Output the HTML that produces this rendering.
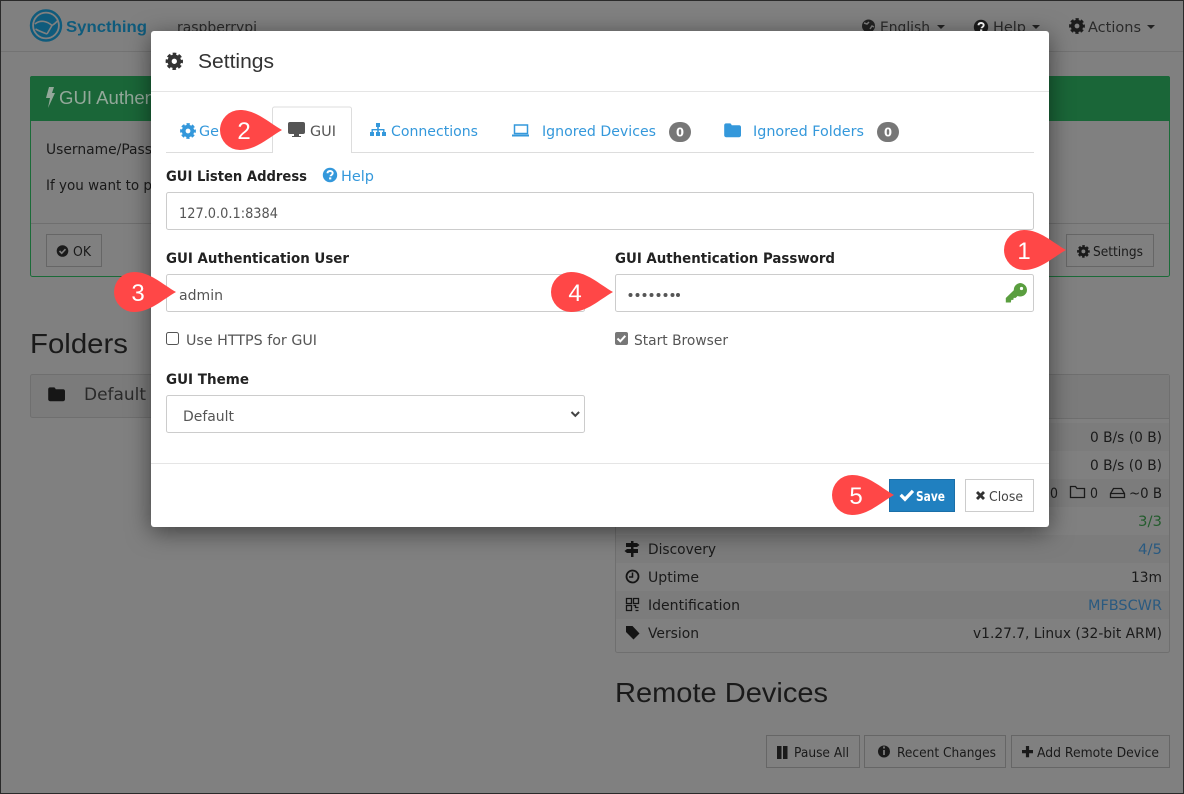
<!DOCTYPE html>
<html><head><meta charset="utf-8"><title>Syncthing Settings</title>
<style>
html,body{margin:0;padding:0;background:#808080;width:1184px;height:794px;overflow:hidden}
svg{display:block;position:absolute;left:0;top:0}
text{font-family:"DejaVu Sans","Liberation Sans",sans-serif;font-size:14.5px;fill:#1a1a1a}
text.h{font-family:"Liberation Sans",sans-serif}
.b{font-weight:bold}
text.m{fill:#333}
text.l{fill:#3498db}
text.i{fill:#555}
text.n{font-family:"Liberation Sans",sans-serif;fill:#fff;font-size:24px}
</style></head><body>
<svg width="1184" height="794" viewBox="0 0 1184 794" xmlns="http://www.w3.org/2000/svg">
<defs>
<g id="gear"><circle cx="8" cy="8" r="4.300" fill="none" stroke="currentColor" stroke-width="3.800"/><circle cx="8" cy="8" r="6.500" fill="none" stroke="currentColor" stroke-width="2.800" stroke-dasharray="3.100 2" stroke-dashoffset="1.550"/></g>
<g id="help"><circle cx="8" cy="8" r="7.200" fill="currentColor"/><path d="M5.400 6.200C5.600 4.700 6.700 4 8.100 4c1.500 0 2.600.9 2.600 2.100 0 1.900-2.100 1.800-2.100 3.200" fill="none" stroke="#fff" stroke-width="1.900"/><rect x="7.100" y="10.400" width="2.200" height="2" fill="#fff"/></g>
<path id="folder" d="M1 3.500C1 2.700 1.700 2 2.500 2h3.200c.8 0 1.100.5 1.400 1.200l.2.3h6.200c.8 0 1.500.7 1.500 1.500v7c0 .8-.7 1.500-1.500 1.500h-11C1.700 13.500 1 12.800 1 12z"/>
</defs>

<!-- background page -->
<rect x="0" y="0" width="1184" height="794" fill="#808080"/>
<rect x="0" y="51" width="1184" height="1" fill="#737373"/>
<circle cx="46" cy="25.500" r="15" fill="#808080" stroke="#0f5b7c" stroke-width="2.400"/>
<circle cx="46" cy="25.500" r="12" fill="#0f5b7c"/>
<path d="M35 24C40 19.500 47 21 52 25.500M52 25.500C54.500 24 56 22.500 57.500 21M52 25.500L47 34M35.500 29C39 31 43 32.500 47 34" fill="none" stroke="#808080" stroke-width="1.600"/>
<text class="b h" x="66" y="32" textLength="81" lengthAdjust="spacingAndGlyphs" style="fill:#0f5b7c;font-size:16px">Syncthing</text>
<text x="177" y="32" textLength="80" lengthAdjust="spacingAndGlyphs" style="fill:#2a2a2a">raspberrypi</text>
<circle cx="868.500" cy="26" r="6.500" fill="#222"/><path d="M864 23l3 1 2-2M870 29l2-3 2 1" fill="none" stroke="#808080" stroke-width="1.500"/>
<text x="880" y="32" textLength="50" lengthAdjust="spacingAndGlyphs" style="fill:#2a2a2a">English</text>
<path d="M937 25h8l-4 4z" fill="#222"/>
<use href="#help" x="973" y="19" style="color:#1c1c1c"/>
<text x="993" y="32" textLength="33" lengthAdjust="spacingAndGlyphs" style="fill:#2a2a2a">Help</text>
<path d="M1032 25h8l-4 4z" fill="#222"/>
<use href="#gear" x="1069" y="18" style="color:#1c1c1c"/>
<text x="1088" y="32" textLength="53" lengthAdjust="spacingAndGlyphs" style="fill:#2a2a2a">Actions</text>
<path d="M1147 25h8l-4 4z" fill="#222"/>

<!-- auth panel -->
<rect x="30.500" y="76.500" width="1139" height="200" rx="2" fill="#808080" stroke="#1b6b38"/>
<path d="M30 78a2 2 0 0 1 2-2h1136a2 2 0 0 1 2 2v43H30z" fill="#1a6638"/>
<path d="M49 87h5l-2 6h3l-7 15 2-10h-4z" fill="#93a89a"/>
<text class="h" x="59" y="104" textLength="96" lengthAdjust="spacingAndGlyphs" style="fill:#93a89a;font-size:18px">GUI Authen</text>
<text x="46" y="154" textLength="106" lengthAdjust="spacingAndGlyphs">Username/Pass</text>
<text x="46" y="190" textLength="106" lengthAdjust="spacingAndGlyphs">If you want to p</text>
<rect x="31" y="223" width="1138" height="1" fill="#6f6f6f"/>
<rect x="46.500" y="234.500" width="55" height="32" fill="#808080" stroke="#666"/>
<circle cx="62.500" cy="251" r="5.800" fill="#1a1a1a"/><path d="M59.500 251l2.200 2.200 3.800-4" fill="none" stroke="#808080" stroke-width="1.600"/>
<text x="73" y="256" textLength="18" lengthAdjust="spacingAndGlyphs" style="font-size:13.5px">OK</text>
<rect x="1066.500" y="234.500" width="87" height="32" fill="#808080" stroke="#666"/>
<use href="#gear" transform="translate(1077 245) scale(.8)" style="color:#1a1a1a"/>
<text x="1093" y="256" textLength="50" lengthAdjust="spacingAndGlyphs" style="font-size:13.5px">Settings</text>

<!-- folders -->
<text class="h" x="30" y="353" textLength="98" lengthAdjust="spacingAndGlyphs" style="font-size:28px">Folders</text>
<rect x="30.500" y="374.500" width="140" height="43" rx="2" fill="#7b7b7b" stroke="#6f6f6f"/>
<use href="#folder" transform="translate(47 385) scale(1.200)" fill="#161616"/>
<text x="84" y="400" textLength="62" lengthAdjust="spacingAndGlyphs" style="font-size:17px;fill:#2a2a2a">Default</text>

<!-- status panel -->
<rect x="615.500" y="374.500" width="554" height="278" rx="2" fill="#808080" stroke="#6f6f6f"/>
<rect x="616" y="375" width="553" height="43" fill="#7b7b7b"/>
<rect x="616" y="418" width="553" height="1" fill="#6f6f6f"/>
<rect x="616" y="423" width="553" height="28" fill="#7c7c7c"/>
<rect x="616" y="479" width="553" height="28" fill="#7c7c7c"/>
<rect x="616" y="535" width="553" height="28" fill="#7c7c7c"/>
<rect x="616" y="591" width="553" height="28" fill="#7c7c7c"/>
<text x="1090" y="442" textLength="72" lengthAdjust="spacingAndGlyphs">0 B/s (0 B)</text>
<text x="1090" y="470" textLength="72" lengthAdjust="spacingAndGlyphs">0 B/s (0 B)</text>
<text x="1050" y="498" textLength="8" lengthAdjust="spacingAndGlyphs">0</text>
<path d="M1070.500 486.500h5l1.500 2h7.500v9h-14z" fill="none" stroke="#1a1a1a" stroke-width="1.300"/>
<text x="1090" y="498" textLength="8" lengthAdjust="spacingAndGlyphs">0</text>
<path d="M1110.500 497.500v-4l3-5h8l3 5v4zM1110.500 493.500h14" fill="none" stroke="#1a1a1a" stroke-width="1.300"/>
<text x="1129" y="498" textLength="33" lengthAdjust="spacingAndGlyphs">~0 B</text>
<text x="1138" y="526" textLength="24" lengthAdjust="spacingAndGlyphs" style="fill:#245c2e">3/3</text>
<path d="M631 541h2.500v16H631zM626 543h11l2.500 2-2.500 2h-11zM627 549h11v4h-11l-2.500-2z" fill="#141414"/>
<text x="648" y="554" textLength="68" lengthAdjust="spacingAndGlyphs">Discovery</text>
<text x="1138" y="554" textLength="24" lengthAdjust="spacingAndGlyphs" style="fill:#2a5a80">4/5</text>
<circle cx="632.500" cy="576.500" r="6" fill="none" stroke="#141414" stroke-width="1.800"/><path d="M632.500 572.500v4.500h-3.500" fill="none" stroke="#141414" stroke-width="1.500"/>
<text x="648" y="582" textLength="51" lengthAdjust="spacingAndGlyphs">Uptime</text>
<text x="1131" y="582" textLength="31" lengthAdjust="spacingAndGlyphs">13m</text>
<path d="M626.500 598.500h5v5h-5zM633.500 598.500h5v5h-5zM626.500 605.500h5v5h-5zM633.500 605.500h2v2h3M638.500 610.500h-3" fill="none" stroke="#141414" stroke-width="1.300"/>
<text x="648" y="610" textLength="92" lengthAdjust="spacingAndGlyphs">Identification</text>
<text x="1088" y="610" textLength="74" lengthAdjust="spacingAndGlyphs" style="fill:#2a5a80">MFBSCWR</text>
<path d="M626 626h6.500l7 7.500-6 6-7.500-7.500z" fill="#141414"/>
<text x="648" y="638" textLength="51" lengthAdjust="spacingAndGlyphs">Version</text>
<text x="973" y="638" textLength="189" lengthAdjust="spacingAndGlyphs">v1.27.7, Linux (32-bit ARM)</text>

<text class="h" x="615" y="702" textLength="213" lengthAdjust="spacingAndGlyphs" style="font-size:28px">Remote Devices</text>
<rect x="766.500" y="735.500" width="93" height="32" fill="#808080" stroke="#666"/>
<path d="M777 746h4.500v13H777zM783 746h4.500v13H783z" fill="#1a1a1a"/>
<text x="794" y="757" textLength="55" lengthAdjust="spacingAndGlyphs" style="font-size:13.5px">Pause All</text>
<rect x="864.500" y="735.500" width="141" height="32" fill="#808080" stroke="#666"/>
<circle cx="884" cy="751.500" r="6" fill="#1a1a1a"/><path d="M884 746.500v2M884 750v5" stroke="#808080" stroke-width="1.700"/>
<text x="897" y="757" textLength="99" lengthAdjust="spacingAndGlyphs" style="font-size:13.5px">Recent Changes</text>
<rect x="1011.500" y="735.500" width="158" height="32" fill="#808080" stroke="#666"/>
<path d="M1022 750h11v3.200h-11zM1025.900 746h3.200v11.300h-3.200z" fill="#1a1a1a"/>
<text x="1037" y="757" textLength="122" lengthAdjust="spacingAndGlyphs" style="font-size:13.5px">Add Remote Device</text>

<!-- screenshot frame -->
<rect x="0.500" y="0.500" width="1183" height="793" fill="none" stroke="#2a2a2a"/>

<!-- modal -->
<rect x="151" y="31" width="898" height="496" rx="3" fill="#fff" style="filter:drop-shadow(0 5px 12px rgba(0,0,0,.5))"/>
<use href="#gear" transform="translate(165.500 52.500) scale(1.100)" style="color:#333"/>
<text class="h m" x="198" y="68" textLength="76" lengthAdjust="spacingAndGlyphs" style="font-size:20px">Settings</text>
<rect x="151" y="91" width="898" height="1" fill="#e5e5e5"/>

<rect x="166" y="152" width="868" height="1" fill="#ddd"/>
<path d="M272.500 152.500V109a2 2 0 0 1 2-2h75a2 2 0 0 1 2 2v44" fill="#fff" stroke="#ddd"/>
<rect x="273" y="150" width="78" height="4" fill="#fff"/>
<use href="#gear" x="180" y="123" style="color:#3498db"/>
<text class="l" x="199" y="136" textLength="20" lengthAdjust="spacingAndGlyphs">Ge</text>
<rect x="288.500" y="122.500" width="16" height="11" rx="1.500" fill="#555" stroke="#555"/><path d="M294 134h5v2h2v1h-9v-1h2z" fill="#555"/>
<text class="i" x="310" y="136" textLength="26" lengthAdjust="spacingAndGlyphs">GUI</text>
<path d="M376 123h4v4h-1.200v2h5.700v3h1.500v4h-4v-4h1.100v-1.600h-4.300v1.600h1.200v4h-4v-4h1.200v-1.600h-4.300v1.600h1.100v4h-4v-4h1.500v-3h5.700v-2H376z" fill="#3498db"/>
<text class="l" x="391" y="136" textLength="87" lengthAdjust="spacingAndGlyphs">Connections</text>
<rect x="514.500" y="125" width="13" height="8.500" fill="none" stroke="#3498db" stroke-width="1.500"/><rect x="512" y="134.500" width="17" height="2" fill="#3498db"/>
<text class="l" x="542" y="136" textLength="114" lengthAdjust="spacingAndGlyphs">Ignored Devices</text>
<rect x="669" y="122" width="22" height="20" rx="10" fill="#777"/>
<text x="676" y="136.500" textLength="8" lengthAdjust="spacingAndGlyphs" class="b" style="font-size:12px;fill:#fff">0</text>
<use href="#folder" fill="#3498db" transform="translate(723 121) scale(1.200)"/>
<text class="l" x="753" y="136" textLength="111" lengthAdjust="spacingAndGlyphs">Ignored Folders</text>
<rect x="877" y="122" width="22" height="20" rx="10" fill="#777"/>
<text x="884" y="136.500" textLength="8" lengthAdjust="spacingAndGlyphs" class="b" style="font-size:12px;fill:#fff">0</text>

<text class="b" x="166" y="181" textLength="141" lengthAdjust="spacingAndGlyphs" style="fill:#222">GUI Listen Address</text>
<use href="#help" x="322" y="167" style="color:#3498db"/>
<text class="l" x="341" y="181" textLength="33" lengthAdjust="spacingAndGlyphs">Help</text>
<rect x="166.500" y="192.500" width="867" height="37" rx="2" fill="#fff" stroke="#ccc"/>
<text class="i" x="179" y="218" textLength="99" lengthAdjust="spacingAndGlyphs">127.0.0.1:8384</text>

<text class="b" x="166" y="263" textLength="183" lengthAdjust="spacingAndGlyphs" style="fill:#222">GUI Authentication User</text>
<rect x="166.500" y="274.500" width="418" height="37" rx="2" fill="#fff" stroke="#ccc"/>
<text class="i" x="179" y="300" textLength="44" lengthAdjust="spacingAndGlyphs">admin</text>
<text class="b" x="615" y="263" textLength="220" lengthAdjust="spacingAndGlyphs" style="fill:#222">GUI Authentication Password</text>
<rect x="615.500" y="274.500" width="418" height="37" rx="2" fill="#fff" stroke="#ccc"/>
<g fill="#555"><circle cx="630.500" cy="295" r="2"/><circle cx="637.500" cy="295" r="2"/><circle cx="644.500" cy="295" r="2"/><circle cx="651.500" cy="295" r="2"/><circle cx="658.500" cy="295" r="2"/><circle cx="665.500" cy="295" r="2"/><circle cx="672.500" cy="295" r="2"/><circle cx="678" cy="295" r="2"/></g>
<path d="M1020 283a7 7 0 0 1 6.500 9.500 7 7 0 0 1-9 3.500l-1.800 1.900h-2l-.4 2h-2l-.5 2.600h-5v-4.500l8-7.800a7 7 0 0 1 6.200-7.200z" fill="#5a9e3f"/><circle cx="1021.500" cy="288.500" r="1.600" fill="#fff"/>

<rect x="166.500" y="332.500" width="12" height="12" rx="2" fill="#fff" stroke="#555"/>
<text class="i" x="186" y="345" textLength="131" lengthAdjust="spacingAndGlyphs">Use HTTPS for GUI</text>
<rect x="615" y="332" width="13" height="13" rx="2" fill="#777"/>
<path d="M617.500 338.500l2.800 2.800 5-5.500" fill="none" stroke="#fff" stroke-width="2"/>
<text class="i" x="634" y="345" textLength="94" lengthAdjust="spacingAndGlyphs">Start Browser</text>

<text class="b" x="166" y="384" textLength="83" lengthAdjust="spacingAndGlyphs" style="fill:#222">GUI Theme</text>
<rect x="166.500" y="395.500" width="418" height="37" rx="2" fill="#fff" stroke="#ccc"/>
<text class="i" x="183" y="421" textLength="51" lengthAdjust="spacingAndGlyphs">Default</text>
<path d="M571.500 412l3.800 3.800 3.800-3.800" fill="none" stroke="#444" stroke-width="2"/>

<rect x="151" y="463" width="898" height="1" fill="#e5e5e5"/>
<rect x="889.500" y="479.500" width="65" height="32" fill="#2080c0" stroke="#1b6fa8"/>
<path d="M899.500 496l2.300-2.300 3.200 3.200 6.800-7.200 2.300 2.300-9.100 9.600z" fill="#fff"/>
<text class="b" x="916" y="501" textLength="29" lengthAdjust="spacingAndGlyphs" style="font-size:13.5px;fill:#fff">Save</text>
<rect x="965.500" y="479.500" width="68" height="32" fill="#fff" stroke="#ccc"/>
<path d="M976 493l2-2 2.500 2.500 2.500-2.500 2 2-2.500 2.500 2.500 2.500-2 2-2.500-2.500-2.500 2.500-2-2 2.500-2.500z" fill="#333"/>
<text x="989" y="501" textLength="34" lengthAdjust="spacingAndGlyphs" style="font-size:13.5px;fill:#444">Close</text>

<!-- callouts -->
<g fill="#ff4747">
<path d="M1066 250C1052 242 1040 230 1024 230A20 20 0 0 0 1024 270C1040 270 1052 258 1066 250Z"/>
<path d="M282 130C268 122 256 110 240 110A20 20 0 0 0 240 150C256 150 268 138 282 130Z"/>
<path d="M176 292C162 284 150 272 134 272A20 20 0 0 0 134 312C150 312 162 300 176 292Z"/>
<path d="M613 292C599 284 587 272 571 272A20 20 0 0 0 571 312C587 312 599 300 613 292Z"/>
<path d="M894 495C880 487 868 475 852 475A20 20 0 0 0 852 515C868 515 880 503 894 495Z"/>
</g>
<text class="n" x="1024" y="259" text-anchor="middle">1</text>
<text class="n" x="244" y="139" text-anchor="middle">2</text>
<text class="n" x="138" y="301" text-anchor="middle">3</text>
<text class="n" x="575" y="301" text-anchor="middle">4</text>
<text class="n" x="856" y="504" text-anchor="middle">5</text>
</svg>
</body></html>
